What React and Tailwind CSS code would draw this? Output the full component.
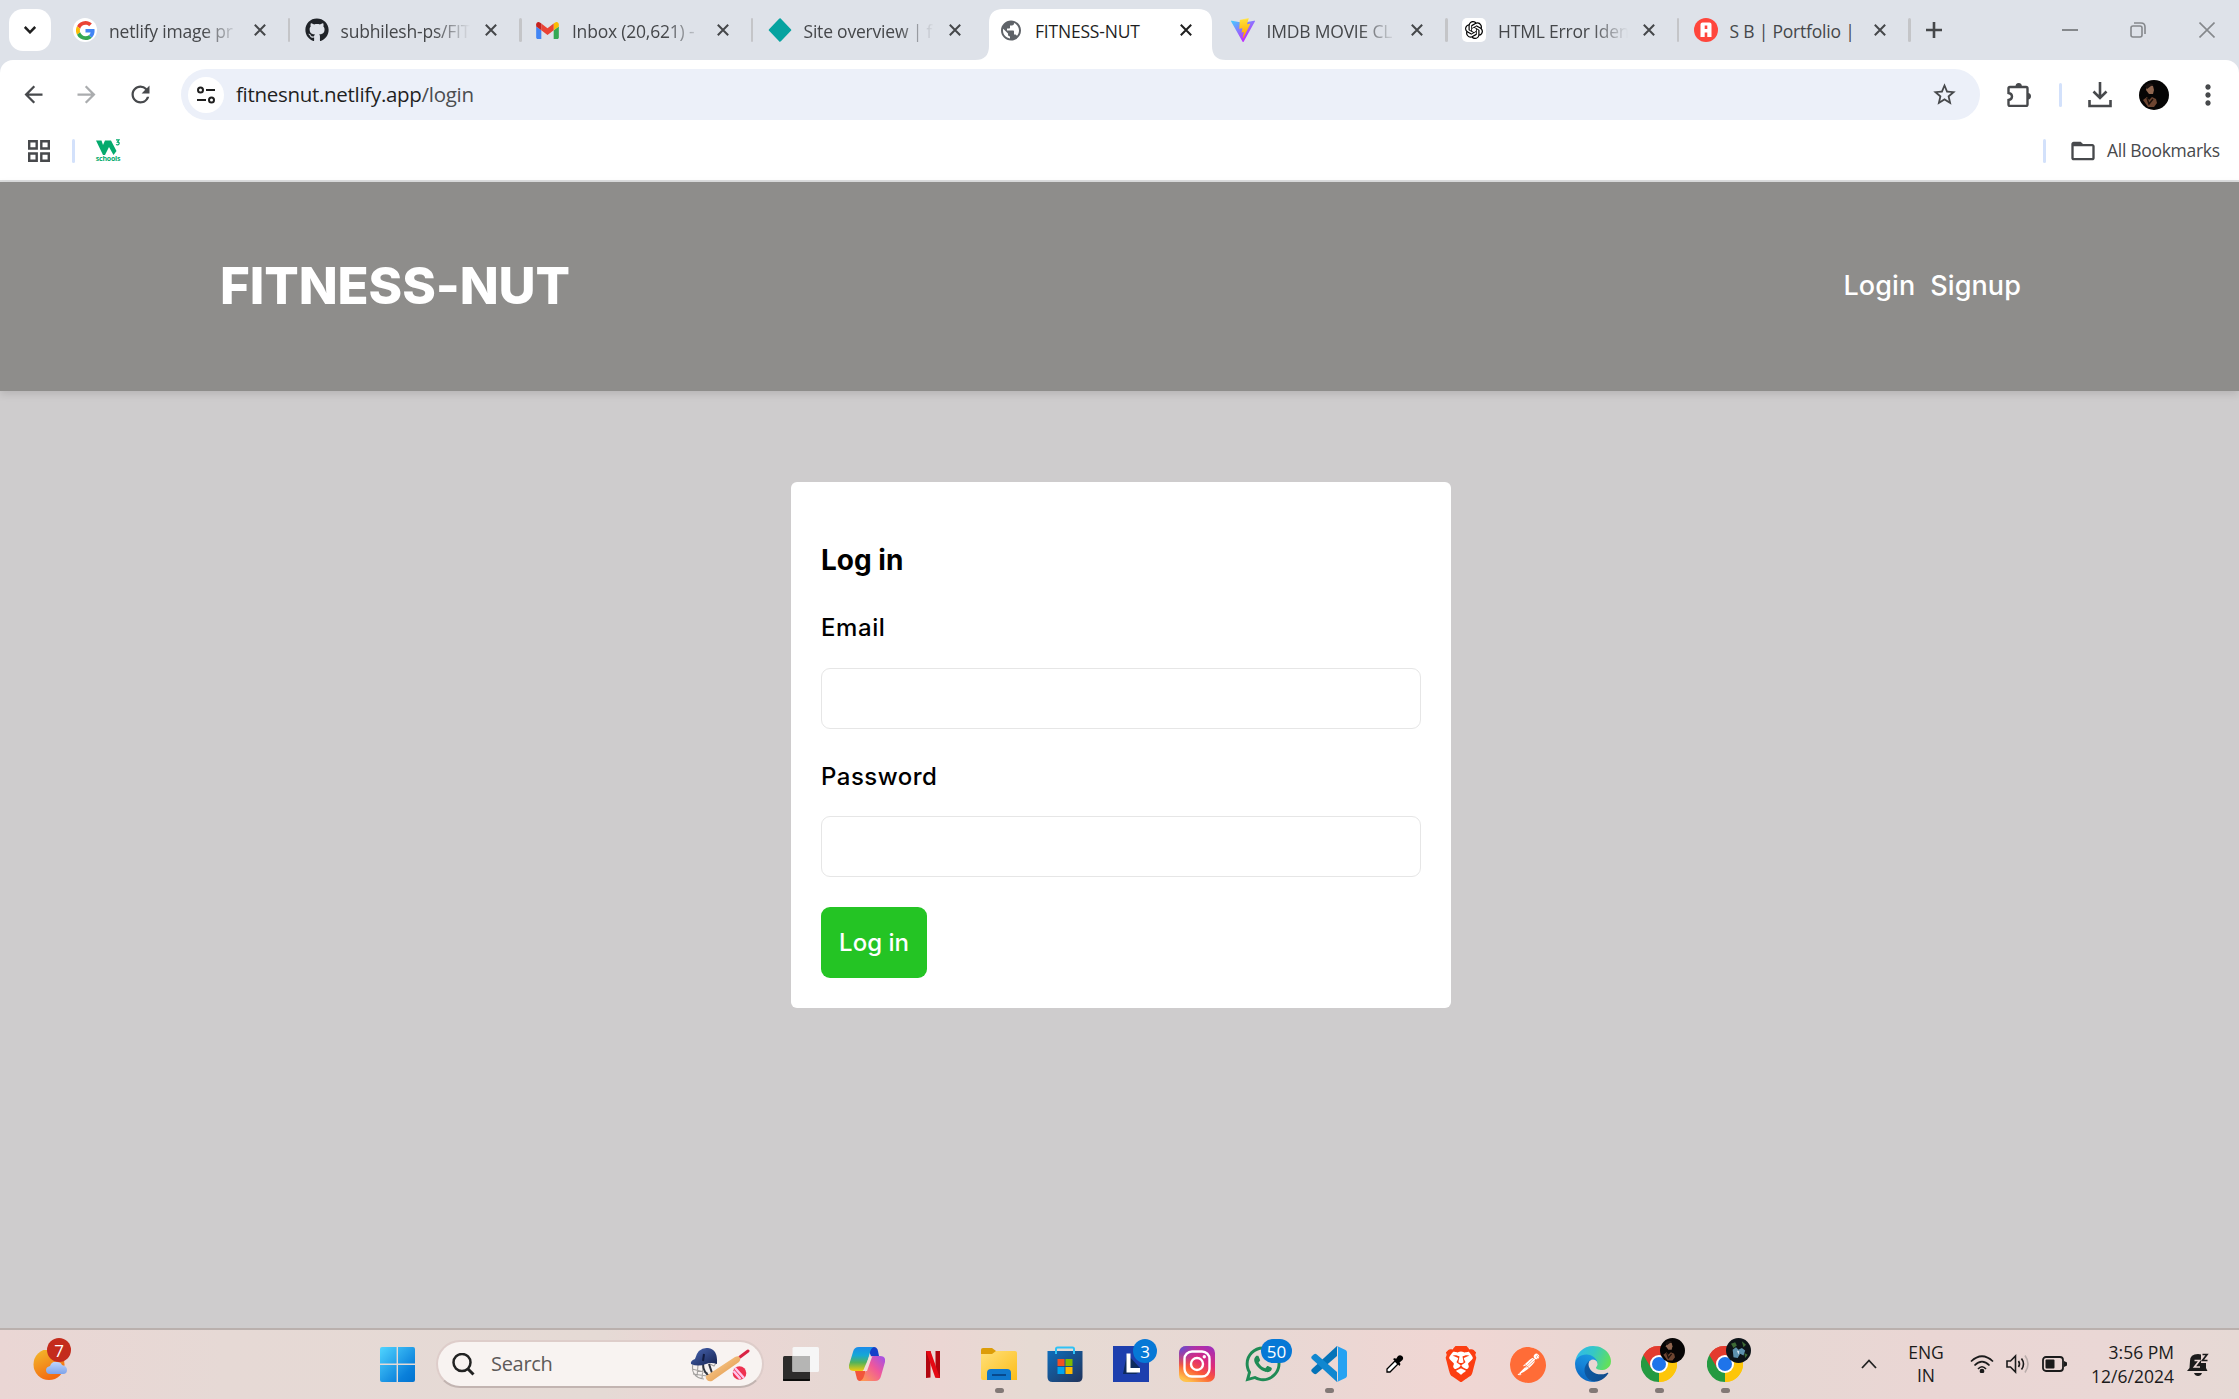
import React from "react";
import { FaGithub, FaWhatsapp } from "react-icons/fa";
import { SiOpenai, SiBrave, SiPostman } from "react-icons/si";
import {
  MdArrowBack, MdArrowForward, MdRefresh, MdStarBorder,
  MdMoreVert, MdPublic, MdFolderOpen,
} from "react-icons/md";

const X = ({ className = "" }) => (
  <svg viewBox="0 0 12 12" className={"h-3 w-3 " + className} fill="none" stroke="currentColor" strokeWidth="2">
    <path d="M.8.8l10.4 10.4M11.2.8L.8 11.2" />
  </svg>
);

const Google = () => (
  <div className="flex h-6 w-6 items-center justify-center rounded-full bg-white">
    <svg viewBox="0 0 48 48" className="h-[19px] w-[19px]">
      <path fill="#EA4335" d="M24 9.5c3.54 0 6.71 1.22 9.21 3.6l6.85-6.85C35.9 2.38 30.47 0 24 0 14.62 0 6.51 5.38 2.56 13.22l7.98 6.19C12.43 13.72 17.74 9.5 24 9.5z" />
      <path fill="#4285F4" d="M46.98 24.55c0-1.57-.15-3.09-.38-4.55H24v9.02h12.94c-.58 2.96-2.26 5.48-4.78 7.18l7.73 6c4.51-4.18 7.09-10.36 7.09-17.65z" />
      <path fill="#FBBC05" d="M10.53 28.59a14.5 14.5 0 0 1 0-9.18l-7.98-6.19a24 24 0 0 0 0 21.56l7.98-6.19z" />
      <path fill="#34A853" d="M24 48c6.48 0 11.93-2.13 15.89-5.81l-7.73-6c-2.15 1.45-4.92 2.3-8.16 2.3-6.26 0-11.57-4.22-13.47-9.91l-7.98 6.19C6.51 42.62 14.62 48 24 48z" />
    </svg>
  </div>
);

const Gmail = () => (
  <svg viewBox="52 42 88 66" className="h-[17px] w-[23px]">
    <path fill="#4285f4" d="M58 108h14V74L52 59v43c0 3.32 2.69 6 6 6" />
    <path fill="#34a853" d="M120 108h14c3.32 0 6-2.69 6-6V59l-20 15" />
    <path fill="#fbbc04" d="M120 48v26l20-15v-8c0-7.42-8.47-11.65-14.4-7.2" />
    <path fill="#ea4335" d="M72 74V48l24 18 24-18v26L96 92" />
    <path fill="#c5221f" d="M52 51v8l20 15V48l-5.6-4.2c-5.94-4.45-14.4-.22-14.4 7.2" />
  </svg>
);

const Vite = () => (
  <svg viewBox="0 0 256 257" className="h-6 w-6">
    <defs>
      <linearGradient id="va" x1="0" y1="0" x2="60%" y2="80%"><stop offset="0" stopColor="#41D1FF" /><stop offset="1" stopColor="#BD34FE" /></linearGradient>
      <linearGradient id="vb" x1="43%" y1="2%" x2="50%" y2="89%"><stop offset="0" stopColor="#FFEA83" /><stop offset=".1" stopColor="#FFDD35" /><stop offset="1" stopColor="#FFA800" /></linearGradient>
    </defs>
    <path fill="url(#va)" d="M255.2 37.9L134.9 253c-2.5 4.4-8.9 4.5-11.4 0L.9 37.9c-2.8-4.8 1.4-10.7 6.8-9.7l120.4 21.5c.8.1 1.6.1 2.3 0l117.9-21.5c5.5-1 9.6 4.8 6.9 9.7z" />
    <path fill="url(#vb)" d="M185.4.1L96.4 17.5a3.3 3.3 0 0 0-2.6 3l-5.5 92.5a3.3 3.3 0 0 0 4 3.4l24.8-5.7c2.3-.5 4.4 1.5 3.9 3.9l-7.4 36c-.5 2.4 1.8 4.5 4.1 3.8l15.3-4.7c2.4-.7 4.6 1.4 4.1 3.8l-11.7 56.6c-.7 3.5 4 5.5 5.9 2.5l1.3-2 72.5-144.7c1.2-2.4-.9-5.2-3.5-4.7l-25.5 4.9a3.3 3.3 0 0 1-3.8-4.1L189 4.3a3.3 3.3 0 0 0-3.6-4.2z" />
  </svg>
);

const tabs = [
  { t: "netlify image pr", i: <Google /> },
  { t: "subhilesh-ps/FIT", i: <FaGithub className="h-6 w-6 text-[#1f2328]" /> },
  { t: "Inbox (20,621) -", i: <Gmail /> },
  { t: "Site overview | f", hide: true, i: <svg viewBox="0 0 24 24" className="h-6 w-6"><path d="M12 1.5L22 12 12 22.5 2 12z" fill="#05a3a0" stroke="#05a3a0" strokeWidth="2.5" strokeLinejoin="round" /></svg> },
  { t: "FITNESS-NUT", active: true, hide: true, i: <MdPublic className="h-[25px] w-[25px] text-[#5f6368]" /> },
  { t: "IMDB MOVIE CL", i: <Vite /> },
  { t: "HTML Error Iden", i: <div className="flex h-6 w-6 items-center justify-center rounded-[5px] bg-white"><SiOpenai className="h-[18px] w-[18px] text-black" /></div> },
  { t: "S B | Portfolio |", plain: true, i: <svg viewBox="0 0 24 24" className="h-6 w-6"><circle cx="12" cy="12" r="12" fill="#ff463c" /><path d="M6.5 19V6.500q0-2 2-2h7q2 0 2 2V19h-4.200v-4.500h-2.600V19zM10.700 7.500v3.500h2.600V7.500z" fill="#fff" fillRule="evenodd" /></svg> },
];

function Tab({ tab }) {
  return (
    <div className="relative flex h-[60px] w-[231.5px] shrink-0">
      {tab.active && (
        <svg className="absolute left-[-10px] top-[9px] h-[51px] w-[251px]" viewBox="0 0 251 51" fill="#fff">
          <path d="M0 51q14 0 14-14V14Q14 0 28 0h195q14 0 14 14v23q0 14 14 14z" />
        </svg>
      )}
      <div className="relative flex h-full w-full items-center pl-[14px]">
        <div className="flex w-6 justify-center">{tab.i}</div>
        <div className={"ml-3 w-[130px] overflow-hidden whitespace-nowrap pt-[3px] text-[17.5px] tracking-[-0.2px] " +
          (tab.active ? "text-[#1f1f1f]" : "text-[#45474a]") +
          (tab.active || tab.plain ? "" : " [mask-image:linear-gradient(to_right,#000_72%,transparent_100%)]")}>
          {tab.t}
        </div>
        <X className={"ml-[15px] " + (tab.active ? "text-[#1f1f1f]" : "text-[#45474a]")} />
        {!tab.hide && <div className="ml-[22px] h-6 w-[3px] rounded-full bg-[#c4c5c8]" />}
      </div>
    </div>
  );
}

const Win = () => (
  <svg viewBox="0 0 35 35" className="h-[35px] w-[35px]">
    <defs><linearGradient id="w" x1="0" y1="0" x2="1" y2="1" gradientUnits="objectBoundingBox"><stop stopColor="#50d5ff" /><stop offset=".75" stopColor="#0a80db" /><stop offset="1" stopColor="#0173cf" /></linearGradient></defs>
    <path fill="url(#w)" d="M2 0h14.600v16.600H0V2Q0 0 2 0zM18 0h15q2 0 2 2v14.600H18zM0 18h16.600v17H2q-2 0-2-2zM18 18h17v15q0 2-2 2H18z" />
  </svg>
);

const Cricket = () => (
  <svg viewBox="0 0 60 36" className="h-9 w-[60px]">
    <defs>
      <linearGradient id="bat" x1="0" y1="0" x2="1" y2="1"><stop stopColor="#ffd9a0" /><stop offset="1" stopColor="#dd8c3c" /></linearGradient>
      <linearGradient id="hel" x1="0" y1="0" x2="1" y2="1"><stop stopColor="#4a68b5" /><stop offset="1" stopColor="#162250" /></linearGradient>
    </defs>
    <path d="M3 18c-2 8 2 14 11 15M2 23l16 4M3 28l14 2M8 19l-1 12M13 20l-1 13M20 18l4 2 2-3" fill="none" stroke="#a3a19f" strokeWidth="1.100" />
    <path d="M13 18q0 9 8 13M19 18l3 9" fill="none" stroke="#30343f" strokeWidth="2" />
    <path d="M1 18q-1-3 4-5Q8 1 18 2q10 1 9 16-6-2-11 0-8 3-15 0z" fill="url(#hel)" />
    <path d="M14 8l-1 7" stroke="#111b40" strokeWidth="2" />
    <path d="M50 11l8-6" stroke="#d92444" strokeWidth="3" strokeLinecap="round" />
    <path d="M16 30L45 11q4-2 5 1 1 2-1 4L22 35q-3 1-5-1t-1-4z" fill="url(#bat)" />
    <circle cx="49.500" cy="27" r="6.800" fill="#ee3150" />
    <path d="M45 22l9 10M43.500 25l7 8" stroke="#ffc4ec" strokeWidth="2.500" />
  </svg>
);

const TaskView = () => (
  <svg viewBox="0 0 36 36" className="h-9 w-9">
    <rect x="0" y="10" width="27" height="25" rx="1.500" fill="#2d2c2b" /><path d="M0 34h27" stroke="#000" strokeWidth="1.500" />
    <rect x="9.500" y="1" width="26.500" height="25" rx="1.500" fill="#f6f6f6" /><path d="M9.500 10H27v16H9.500z" fill="#b5b5b4" />
  </svg>
);

const Copilot = () => (
  <svg viewBox="0 0 36 36" className="h-9 w-9">
    <defs>
      <linearGradient id="ca" x1="0" y1="0" x2="0" y2="1"><stop stopColor="#1a8bea" /><stop offset=".35" stopColor="#16a8d5" /><stop offset=".65" stopColor="#54b35a" /><stop offset="1" stopColor="#f3cc0c" /></linearGradient>
      <linearGradient id="cb" x1="1" y1="0" x2="0" y2="1"><stop stopColor="#9c50ee" /><stop offset=".45" stopColor="#f0589a" /><stop offset="1" stopColor="#ffa34c" /></linearGradient>
    </defs>
    <path d="M18 1h7q3 0 4 4l1 5h-8z" fill="#153fc9" />
    <path d="M10 1h15q-3 1-4 5l-4 15q-1 4-5 4H5q-6 0-5-6L4 6q1-5 6-5z" fill="url(#ca)" />
    <path d="M18 35h-7q-3 0-3.500-4L6 25h10z" fill="#f2553a" />
    <path d="M26 35H11q3-1 4-5l5-16q1-4 5-4h6q6 0 5 6l-4 14q-1 5-6 5z" fill="url(#cb)" />
    <path d="M20 11h3l-5 14h-4z" fill="#f4ddd8" />
  </svg>
);

const Netflix = () => (
  <svg viewBox="0 0 14 27" className="h-[27px] w-[14px]">
    <path d="M0 0h4.500v26.500L0 27zM9.500 0H14v27l-4.500-.5z" fill="#b1060f" /><path d="M0 0h4.500L14 27l-4.800-.6z" fill="#e50914" />
  </svg>
);

const Folder = () => (
  <svg viewBox="0 0 36 36" className="h-9 w-9">
    <defs><linearGradient id="fo" x1="0" y1="0" x2="1" y2="1"><stop stopColor="#ffe07a" /><stop offset="1" stopColor="#fcbd18" /></linearGradient></defs>
    <path d="M0 4q0-2 2-2h9l4 3v5H0z" fill="#dd9d08" />
    <path d="M0 8h11l4-3h19q2 0 2 2v27H2q-2 0-2-2z" fill="url(#fo)" />
    <path d="M6 34v-7q0-4 4-4h16q4 0 4 4v7z" fill="#1078cd" /><path d="M11 29h14" stroke="#07498d" strokeWidth="2" />
  </svg>
);

const Store = () => (
  <svg viewBox="0 0 36 36" className="h-9 w-9">
    <defs><linearGradient id="st" x1="0" y1="0" x2="1" y2="1"><stop stopColor="#0f6dbb" /><stop offset="1" stopColor="#21335b" /></linearGradient></defs>
    <path d="M.5 5h35v26q0 5-5 5h-25q-5 0-5-5z" fill="url(#st)" />
    <path d="M9 8V3q0-1.500 1.500-1.500h15Q27 1.500 27 3v5" fill="none" stroke="#30c2f5" strokeWidth="2" />
    <path d="M10.500 13h7v7h-7z" fill="#f25022" /><path d="M18.500 13h7v7h-7z" fill="#7fba00" /><path d="M10.500 21h7v7h-7z" fill="#00a4ef" /><path d="M18.500 21h7v7h-7z" fill="#ffb900" />
  </svg>
);

const Lapp = () => (
  <svg viewBox="0 0 36 36" className="h-9 w-9">
    <path d="M0 0h36v36H0z" fill="#1d3fae" /><path d="M14 8L10 28h13l4-2V22z" fill="#0d2a5c" />
    <path d="M13.500 7.500h4V22H27v4.500H13.500z" fill="#fff" />
  </svg>
);

const Insta = () => (
  <svg viewBox="0 0 36 36" className="h-9 w-9">
    <defs>
      <linearGradient id="ia" x1=".3" y1="1" x2=".8" y2="0"><stop stopColor="#ffc24c" /><stop offset=".3" stopColor="#fb5a36" /><stop offset=".6" stopColor="#df2a78" /><stop offset="1" stopColor="#a32fb8" /></linearGradient>
      <radialGradient id="ib" cx="0" cy="0" r=".6"><stop stopColor="#4a58dc" /><stop offset="1" stopColor="#8a3ac8" stopOpacity="0" /></radialGradient>
    </defs>
    <rect width="36" height="36" rx="7" fill="url(#ia)" /><rect width="36" height="36" rx="7" fill="url(#ib)" />
    <g fill="none" stroke="#fff" strokeWidth="2.400"><rect x="5.500" y="5.500" width="25" height="25" rx="7.500" /><circle cx="18" cy="18" r="6" /></g>
    <circle cx="25.300" cy="10.800" r="1.700" fill="#fff" />
  </svg>
);

const Code = () => (
  <svg viewBox="0 0 36 36" className="h-9 w-9">
    <path d="M26 0L1 23q-1.500 1.500 0 3l2 1.800q1.200.8 2.500 0L26 10z" fill="#0473b8" />
    <path d="M26 36L1 13q-1.500-1.500 0-3l2-1.800q1.200-.8 2.500 0L26 26z" fill="#1087d0" />
    <path d="M26 0l8.500 4q1.500.8 1.500 2.500v23q0 1.700-1.500 2.500L26 36q1-1 1-3V3q0-2-1-3z" fill="#25a2f2" />
  </svg>
);

const Dropper = () => (
  <svg viewBox="0 0 18 18" className="h-[18px] w-[18px]">
    <path d="M1 17v-3l8-8 3 3-8 8z" fill="#fff" stroke="#000" strokeWidth="1.300" />
    <path d="M7 4l2-1 1 1 2-3q2-1.500 4 0t.5 4l-3 2.500 1 1.500-1 2z" fill="#000" />
  </svg>
);

const Brave = () => (
  <div className="relative h-9 w-[30px]">
    <svg viewBox="0 0 30 36" className="h-9 w-[30px]">
      <path d="M7 2h16l4 5 1 6-5 15-8 6-8-6L2 13l1-6z" fill="#fff" />
    </svg>
    <SiBrave className="absolute left-[-3px] top-0 h-9 w-9 text-[#fc3e12]" />
  </div>
);

const Edge = () => (
  <svg viewBox="0 0 256 256" className="h-9 w-9">
    <defs>
      <linearGradient id="e1" x1="0" y1=".5" x2="1" y2=".6"><stop stopColor="#0c59a4" /><stop offset="1" stopColor="#114a8b" /></linearGradient>
      <linearGradient id="e2" x1=".7" y1="0" x2=".3" y2="1"><stop stopColor="#1b9de2" /><stop offset=".5" stopColor="#1583d8" /><stop offset="1" stopColor="#0a63bd" /></linearGradient>
      <linearGradient id="e3" x1="0" y1=".2" x2="1" y2=".5"><stop stopColor="#2fb8ef" /><stop offset=".5" stopColor="#36c8c4" /><stop offset="1" stopColor="#62e05a" /></linearGradient>
    </defs>
    <path fill="url(#e1)" d="M231 190.500c-3.400 1.800-6.900 3.300-10.500 4.700a101.400 101.400 0 0 1-35.900 6.500c-47.300 0-88.500-32.500-88.500-74.300a31.500 31.500 0 0 1 16.400-27.300c-42.800 1.800-53.800 46.400-53.800 72.500 0 73.900 68.100 81.400 82.800 81.400 7.900 0 19.800-2.300 27-4.600l1.300-.4a128.300 128.300 0 0 0 66.600-52.800 4 4 0 0 0-5.400-5.700z" />
    <path fill="url(#e2)" d="M105.700 241.400a79.200 79.200 0 0 1-22.700-21.300 80.700 80.700 0 0 1 29.500-120c3.200-1.500 8.500-4.100 15.600-4a32.400 32.400 0 0 1 25.700 13 31.900 31.900 0 0 1 6.300 18.700c0-.2 24.500-79.600-80-79.600C36.200 48.200.2 89.800.2 126.300A130.200 130.200 0 0 0 12.300 182a128 128 0 0 0 156.400 67 75.500 75.500 0 0 1-62.800-7.900z" />
    <path fill="url(#e3)" d="M152.300 148.900c-.9 1-3.400 2.500-3.400 5.600 0 2.600 1.700 5.200 4.800 7.300 14.300 10 41.400 8.600 41.500 8.600a59.600 59.600 0 0 0 30.300-8.300 61.400 61.400 0 0 0 30.400-52.900c.3-22.400-8-37.300-11.300-43.900C223.500 23.900 177.700 0 128 0A128 128 0 0 0 0 126.200c.5-36.500 36.800-66 80-66 3.500 0 23.500.3 42 10.100 16.300 8.500 24.900 18.900 30.800 29.200 6.200 10.700 7.300 24.100 7.300 29.500s-2.700 13.300-7.800 19.900z" />
  </svg>
);

const Chrome = () => (
  <svg viewBox="0 0 36 36" className="h-9 w-9">
    <path d="M18 18L2.410 9A18 18 0 0 1 33.590 9z" fill="#e33b2e" />
    <path d="M18 18V36A18 18 0 0 1 2.410 9z" fill="#249a41" />
    <path d="M18 18L33.590 9A18 18 0 0 1 18 36z" fill="#fdc60a" />
    <path d="M18 9.800h15.900A18 18 0 0 0 2.400 9l8 13.500z" fill="#e33b2e" /><path d="M25.300 22.200L18 36A18 18 0 0 0 35.500 14H24z" fill="#fdc60a" />
    <circle cx="18" cy="18" r="9" fill="#fff" /><circle cx="18" cy="18" r="7" fill="#1f74ea" />
  </svg>
);

const Avatar = ({ className }) => (
  <svg viewBox="0 0 30 30" className={className}>
    <circle cx="15" cy="15" r="15" fill="#060505" />
    <path d="M8 6q3-2 6 0l1 4-1 4-4 0-3-4z" fill="#8f6650" /><path d="M6 6q4-5 9-1l-3 1-4 3z" fill="#1a1210" />
    <path d="M4 20l4-3 2 3 3-3 4 2 1 4-3 4h-6z" fill="#6d4531" /><path d="M8 18l2 6 4-5" stroke="#1c100b" strokeWidth="1.500" fill="none" />
  </svg>
);

const Avatar2 = ({ className }) => (
  <svg viewBox="0 0 30 30" className={className}>
    <circle cx="15" cy="15" r="15" fill="#0d1418" />
    <path d="M6 7l5-2 2 4-4 3zM19 4l5 4-3 3zM22 18l4 2-3 4z" fill="#3d6b35" />
    <path d="M8 14l4-3 3 3 4-2 4 3-2 6-4-2-3 5-5-1z" fill="#5d92ae" /><path d="M13 15l3 1-1 4z" fill="#d5e3ec" />
  </svg>
);

const Badge = ({ children, className }) => (
  <div className={"absolute top-[-7px] flex h-6 items-center justify-center rounded-full bg-[#0678d6] text-[17px] leading-none text-white " + className}>{children}</div>
);

const apps = [
  { i: <TaskView /> }, { i: <Copilot /> }, { i: <Netflix /> }, { i: <Folder />, run: true }, { i: <Store /> },
  { i: <Lapp />, over: <Badge className="left-[35px] w-6">3</Badge> },
  { i: <Insta /> },
  { i: <FaWhatsapp className="h-[40px] w-[40px] text-[#1f8b55]" />, over: <Badge className="left-[31px] w-[31px]">50</Badge> },
  { i: <Code />, run: true }, { i: <Dropper /> }, { i: <Brave /> },
  { i: <div className="h-[35px] w-[35px] rounded-full bg-white"><SiPostman className="h-9 w-9 text-[#ff6c37]" /></div> },
  { i: <Edge />, run: true },
  { i: <Chrome />, run: true, over: <Avatar className="absolute left-[34px] top-[-8px] h-[25px] w-[25px]" /> },
  { i: <Chrome />, run: true, over: <Avatar2 className="absolute left-[34px] top-[-8px] h-[25px] w-[25px]" /> },
];

function Taskbar() {
  return (
    <footer className="flex h-[71px] items-center border-t-2 border-[#bab0ad] bg-[linear-gradient(90deg,#ead6d4_0%,#e6d9d5_10%,#e5dad5_27%,#ecd5d4_31%,#e6d8d3_38%,#ebd6d3_42%,#e6dad3_46%,#e8d8d4_56%,#f0d6d3_65%,#e5d8d3_76%,#ead6d4_86%,#ead7d5_94%,#e6d9d5_100%)] pb-px">
      <div className="relative ml-[33px] h-9 w-[346px] pt-1">
        <svg viewBox="0 0 36 34" className="h-[34px] w-9">
          <defs><linearGradient id="su" x1="0" y1="0" x2=".5" y2="1"><stop stopColor="#f3bd2c" /><stop offset="1" stopColor="#f36a10" /></linearGradient><linearGradient id="cl" x1="0" y1="0" x2="0" y2="1"><stop stopColor="#bed6fb" /><stop offset="1" stopColor="#7ea3ea" /></linearGradient></defs>
          <circle cx="16" cy="14.500" r="15.500" fill="url(#su)" />
          <path d="M17 24q-4 0-4-4 0-3 4-4 2-5 7-4 4 0 5 3 5 1 5 5 0 4-4 4z" fill="url(#cl)" />
        </svg>
        <div className="absolute left-[14px] top-[-8px] flex h-6 w-6 items-center justify-center rounded-full bg-[#c42b1c] text-[17px] leading-none text-white">7</div>
      </div>
      <div className="ml-px"><Win /></div>
      <div className="ml-[21px] flex h-12 w-[328px] items-center rounded-full border-2 border-[#decdca] border-b-[#c2b4b1] bg-[#f8f3f1] pl-[14px]">
        <svg viewBox="0 0 23 23" className="h-[23px] w-[23px]" fill="none" stroke="#222" strokeWidth="2.500"><circle cx="10" cy="9.500" r="8.500" /><path d="M15.500 15.500l6 6" strokeWidth="3" /></svg>
        <div className="ml-4 w-[60px] text-[20px] tracking-[-0.3px] text-[#5d5a59]">Search</div>
        <div className="ml-[139px]"><Cricket /></div>
      </div>
      <div className="ml-[4px] flex">
        {apps.map((a, k) => (
          <div key={k} className="relative flex h-9 w-[66px] items-center justify-center">
            {a.i}
            {a.over}
            {a.run && <div className="absolute bottom-[-11px] left-[29px] h-[5px] w-[9px] rounded-full bg-[#827976]" />}
          </div>
        ))}
      </div>
      <svg viewBox="0 0 16 10" className="ml-[103px] h-[10px] w-4" fill="none" stroke="#222" strokeWidth="1.800"><path d="M1 9l7-7.500L15 9" /></svg>
      <div className="ml-[19px] w-[60px] text-center text-[17.500px] leading-[23px] tracking-[-0.1px] text-[#1b1b1b]">ENG<br />IN</div>
      <svg viewBox="0 0 24 18" className="ml-[14px] h-[18px] w-6" fill="none" stroke="#1b1b1b" strokeWidth="1.700"><path d="M1 6.500q11-10.500 22 0M4.500 10.500q7.500-7.500 15 0M8 14q4-4.500 8 0" /><circle cx="12" cy="16" r="1.500" fill="#1b1b1b" /></svg>
      <svg viewBox="0 0 24 20" className="ml-[12px] h-5 w-6" fill="none" stroke="#1b1b1b" strokeWidth="1.600"><path d="M1 7h3.500L9.500 2v16l-5-5H1zM12.500 7q2 3 0 6M15.500 4.500q4 5.500 0 11" /><path d="M19 1.500q6 8.500 0 17" stroke="#b9adab" /></svg>
      <svg viewBox="0 0 25 16" className="ml-[12px] h-4 w-[25px]"><rect x="1" y="1" width="20" height="14" rx="3" fill="none" stroke="#1b1b1b" strokeWidth="1.800" /><rect x="3.500" y="3.500" width="9" height="9" rx="1" fill="#1b1b1b" /><path d="M22 5l3 1.500v3L22 11z" fill="#1b1b1b" /></svg>
      <div className="ml-[7px] w-[100px] text-right text-[17.500px] leading-[24px] text-[#1b1b1b]">3:56 PM<br />12/6/2024</div>
      <svg viewBox="0 0 22 23" className="ml-[13px] h-[23px] w-[22px]">
        <path d="M3 8q0-7 8-7 7 0 8 7v7l1.500 3H0l2.500-3z" fill="#1b1b1b" /><path d="M7 20h8q-1 3-4 3t-4-3z" fill="#1b1b1b" />
        <path d="M14 0h8v10h-8z" fill="#ead7d5" />
        <path d="M7.500 7.500h5L7.500 14h5.500" fill="none" stroke="#ead7d5" strokeWidth="1.700" /><path d="M15.500 1.500H20L15.500 7.500h5" fill="none" stroke="#1b1b1b" strokeWidth="1.700" />
      </svg>
    </footer>
  );
}

export default function App() {
  return (
    <div className="flex h-[1399px] w-[2239px] flex-col overflow-hidden bg-[#dee2e9] font-['Open_Sans',sans-serif]">
      <div className="flex h-[60px] items-center">
        <div className="ml-[9px] flex h-[42px] w-[42px] items-center justify-center rounded-[14px] bg-white">
          <svg viewBox="0 0 12 8" className="h-2 w-3" fill="none" stroke="#1f1f1f" strokeWidth="2.500"><path d="M.8 1L6 6.300 11.200 1" /></svg>
        </div>
        <div className="ml-[8px] flex">{tabs.map((t) => <Tab key={t.t} tab={t} />)}</div>
        <svg viewBox="0 0 16 16" className="ml-[15px] h-4 w-4" stroke="#45474a" strokeWidth="2.600"><path d="M8 0v16M0 8h16" /></svg>
        <svg viewBox="0 0 16 2" className="ml-[120px] h-[2px] w-4"><path d="M0 0h16v2H0z" fill="#85888c" /></svg>
        <svg viewBox="0 0 16 16" className="ml-[52px] h-4 w-4" fill="none" stroke="#85888c" strokeWidth="1.600"><rect x="1" y="4" width="11" height="11" rx="2" /><path d="M4 1h7q4 0 4 4v7" /></svg>
        <svg viewBox="0 0 16 16" className="ml-[53px] h-4 w-4" stroke="#85888c" strokeWidth="1.600"><path d="M.5.5l15 15M15.500.5l-15 15" /></svg>
      </div>

      <div className="h-[120px] rounded-t-[13px] bg-white">
        <div className="flex h-[69px] items-center pl-[7px] text-[#47494c]">
          <div className="flex w-[53px] shrink-0 justify-center"><MdArrowBack className="h-[27px] w-[27px]" /></div>
          <div className="flex w-[53px] shrink-0 justify-center text-[#aaacae]"><MdArrowForward className="h-[27px] w-[27px]" /></div>
          <div className="flex w-[53px] shrink-0 justify-center pl-[2px]"><MdRefresh className="h-[27px] w-[27px]" /></div>
          <div className="ml-[15px] flex h-[51px] w-[1799px] shrink-0 items-center rounded-full bg-[#ecf0f9] pl-[7px]">
            <div className="flex h-9 w-9 items-center justify-center rounded-full bg-white">
              <svg viewBox="0 0 18 18" className="h-[18px] w-[18px]" fill="none" stroke="#1f1f1f" strokeWidth="2"><circle cx="3.500" cy="4" r="2.500" /><path d="M9 4h9M0 14h9" /><circle cx="14.500" cy="14" r="2.500" /></svg>
            </div>
            <div className="ml-3 text-[20.500px] tracking-[-0.3px] text-[#1f1f1f]">fitnesnut.netlify.app<span className="text-[#4b4d50]">/login</span></div>
            <MdStarBorder className="ml-auto mr-[22px] h-[27px] w-[27px]" />
          </div>
          <div className="flex w-[78.5px] shrink-0 justify-center">
            <svg viewBox="0 0 24 24" className="h-6 w-6">
              <path d="M3 4h16q1.500 0 1.500 1.500v16q0 1.500-1.500 1.500H3q-1.500 0-1.500-1.500V17q3.500-.5 3.500-3.500T1.500 10V5.500Q1.500 4 3 4z" fill="none" stroke="currentColor" strokeWidth="2.400" />
              <path d="M8.500 3.500q0-3.500 3.200-3.500t3.200 3.500zM21 10q3 .3 3 3.200T21 16.500z" fill="currentColor" />
            </svg>
          </div>
          <div className="h-6 w-[3px] shrink-0 rounded-full bg-[#d3e1fb]" />
          <div className="flex w-[77px] shrink-0 justify-center"><svg viewBox="0 0 24 26" className="h-[26px] w-6" fill="none" stroke="currentColor" strokeWidth="2.600"><path d="M12 0v15M5.500 9.500L12 16l6.500-6.500M1.500 18v6h21v-6" /></svg></div>
          <Avatar className="h-[30px] w-[30px] shrink-0" />
          <div className="flex w-[70px] shrink-0 justify-center pl-2"><MdMoreVert className="h-[32px] w-[32px]" /></div>
        </div>
        <div className="flex h-[43px] items-center text-[#47494c]">
          <svg viewBox="0 0 22 22" className="ml-7 h-[22px] w-[22px]" fill="none" stroke="currentColor" strokeWidth="2.400"><path d="M1.200 1.200h7.500v7.300H1.200zM13.300 1.200h7.500v7.300h-7.500zM1.200 13.500h7.500v7.300H1.200zM13.300 13.500h7.500v7.300h-7.500z" /></svg>
          <div className="ml-[22px] h-6 w-[3px] rounded-full bg-[#d3e1fb]" />
          <div className="ml-[21px] flex w-6 flex-col items-center">
            <svg viewBox="0 0 24 16" className="h-4 w-6"><path d="M0 1.500h5.500L7 6l2-4.500h6L20.500 12l-3 4-4.500-8-4 8H7z" fill="#04aa6d" /><path d="M20 .8h3L21.500 3q2 0 1.500 2-1 1.500-3 .5" fill="none" stroke="#04aa6d" strokeWidth="1.300" /></svg>
            <div className="text-[7px] font-bold leading-[8px] tracking-[-0.2px] text-[#04aa6d]">schools</div>
          </div>
          <div className="ml-auto h-6 w-[3px] rounded-full bg-[#d3e1fb]" />
          <MdFolderOpen className="ml-[23px] h-[28px] w-[28px]" />
          <div className="ml-[10px] mr-[19px] w-[113px] whitespace-nowrap pb-px text-[17.500px] tracking-[-0.3px]">All Bookmarks</div>
        </div>
      </div>
      <div className="h-[2px] bg-[#dddedf]" />

      <header className="relative flex h-[209px] shrink-0 items-center justify-between bg-[#8e8d8b] pl-[220px] pr-[218px] font-['Inter',sans-serif] text-white shadow-[0_3px_8px_rgba(0,0,0,0.12)]">
        <h1 className="text-[51px] font-extrabold tracking-[-0.1px]">FITNESS-NUT</h1>
        <nav className="flex gap-[15px] text-[27px] font-medium tracking-[0.1px]"><a>Login</a><a>Signup</a></nav>
      </header>

      <main className="flex flex-1 justify-center bg-[#cecccd] pl-[3px] pt-[91px] font-['Inter',sans-serif] text-black">
        <form className="h-[526px] w-[660px] rounded-md bg-white px-[30px] pt-[60px]">
          <h3 className="h-[36px] text-[28px] font-bold leading-[36px]">Log in</h3>
          <label className="mt-[33px] block h-[34px] text-[24px] font-medium leading-[34px] tracking-[0.6px]">Email</label>
          <input className="mt-[23px] block h-[61px] w-full rounded-[9px] border border-[#e6e6e6]" />
          <label className="mt-[31px] block h-[34px] text-[24px] font-medium leading-[34px] tracking-[0.5px]">Password</label>
          <input type="password" className="mt-[22px] block h-[61px] w-full rounded-[9px] border border-[#e6e6e6]" />
          <button type="button" className="mt-[30px] h-[71px] w-[106px] rounded-[9px] bg-[#24c424] text-[24px] font-medium text-white">Log in</button>
        </form>
      </main>
      <Taskbar />
    </div>
  );
}
